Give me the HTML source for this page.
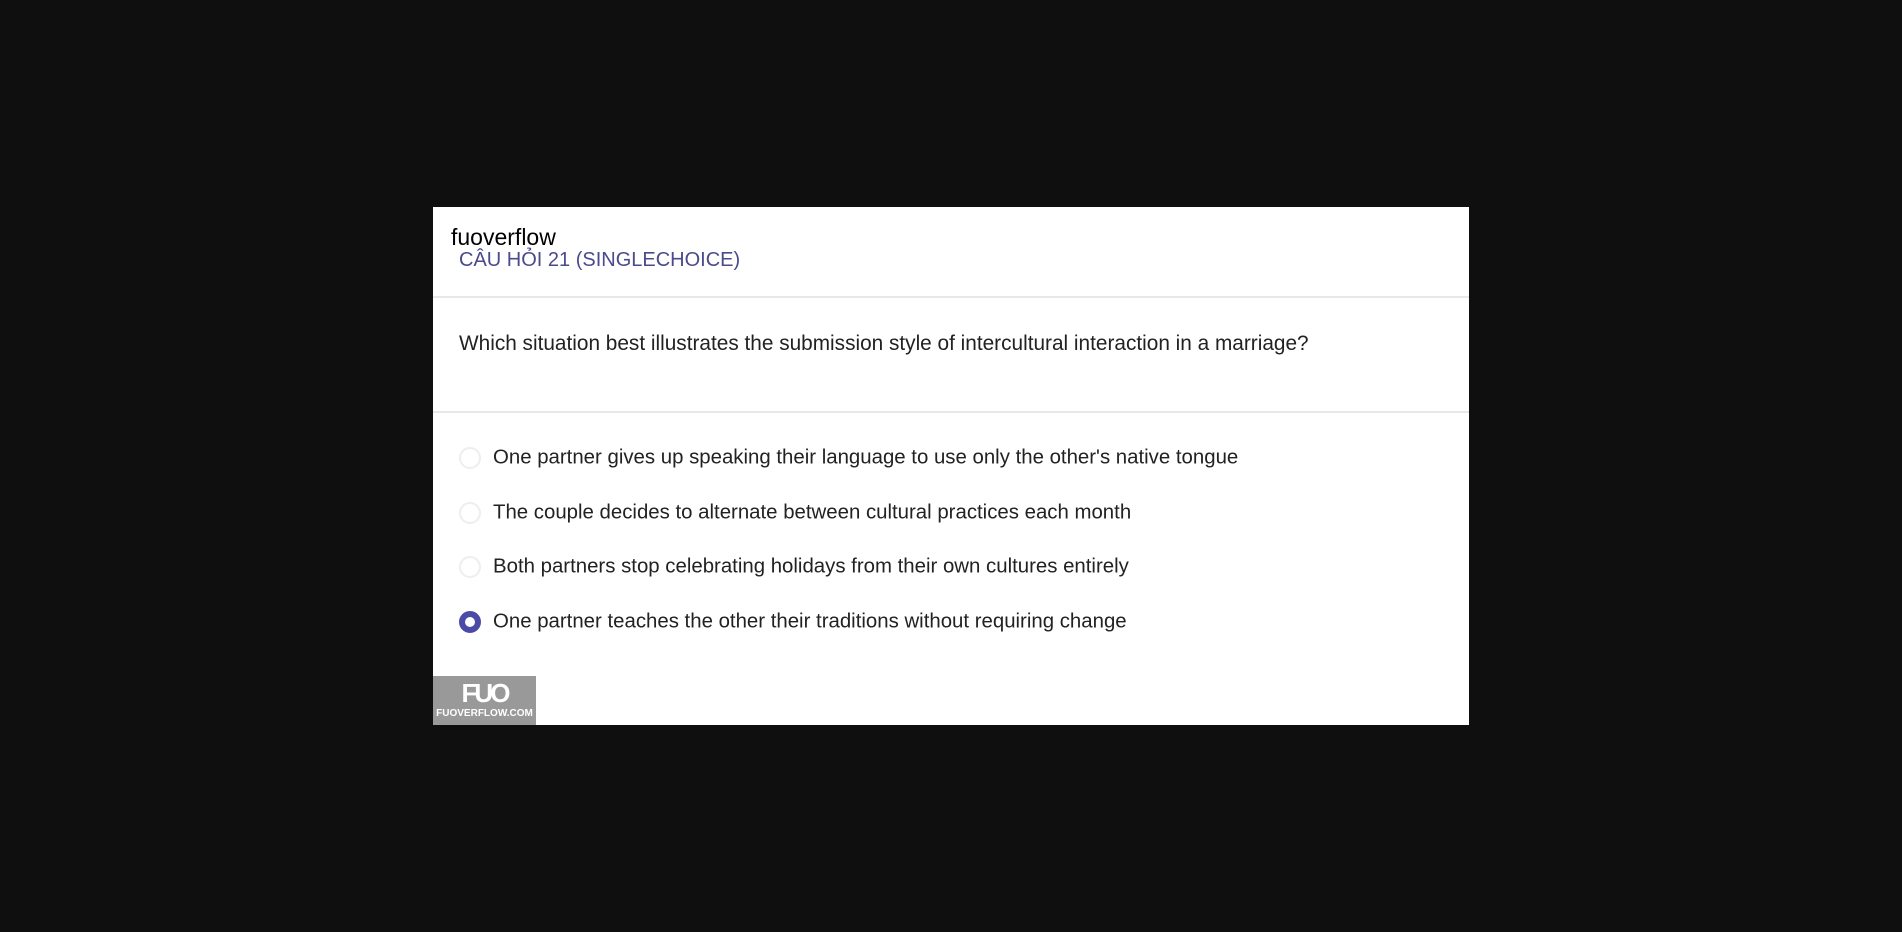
<!DOCTYPE html>
<html><head><meta charset="utf-8"><style>
body{margin:0;width:1902px;height:932px;background:#0f0f0f;position:relative;overflow:hidden;font-family:"Liberation Sans",Arial,sans-serif}
.card{position:absolute;left:433px;top:207px;width:1036px;height:518px;background:#fff}
.t{position:absolute;white-space:nowrap}
.line{position:absolute;left:0;width:1036px;height:2px;background:#e8e8ea}
.r{position:absolute;left:26px;width:22px;height:22px;border-radius:50%;border:2px solid #eee;box-sizing:border-box}
.o{position:absolute;left:60px;font-size:20.4px;color:#222;white-space:nowrap;transform:translateY(-50%)}
</style></head><body>
<div class="card">
<div class="t" style="left:18px;top:17px;font-size:23px;color:#000">fuoverflow</div>
<div class="t" style="left:26px;top:42px;font-size:20px;color:#4a4a8c">CÂU HỎI 21 (SINGLECHOICE)</div>
<div class="line" style="top:89px"></div>
<div class="t" style="left:26px;top:125px;font-size:20.8px;color:#222">Which situation best illustrates the submission style of intercultural interaction in a marriage?</div>
<div class="line" style="top:204px"></div>
<div class="r" style="top:240px"></div><div class="o" style="top:251px">One partner gives up speaking their language to use only the other's native tongue</div>
<div class="r" style="top:295px"></div><div class="o" style="top:306px">The couple decides to alternate between cultural practices each month</div>
<div class="r" style="top:349px"></div><div class="o" style="top:360px">Both partners stop celebrating holidays from their own cultures entirely</div>
<div class="r" style="top:404px;border:6px solid #4b4aa8"></div><div class="o" style="top:415px">One partner teaches the other their traditions without requiring change</div>
<div style="position:absolute;left:0;top:469px;width:103px;height:49px;background:#999;color:#fff;text-align:center">
<div style="font-size:26px;font-weight:bold;line-height:30px;letter-spacing:-3px;margin-top:2px">FUO</div>
<div style="font-size:10px;font-weight:bold;line-height:12px">FUOVERFLOW.COM</div>
</div>
</div>
</body></html>
